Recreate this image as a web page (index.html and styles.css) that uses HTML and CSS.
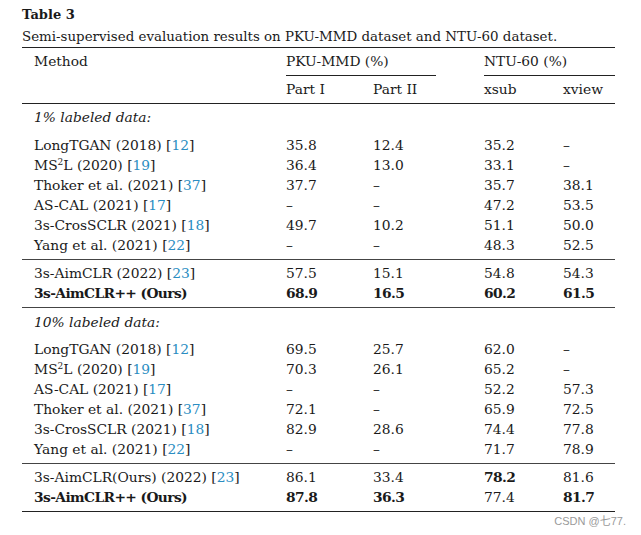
FILE: index.html
```html
<!DOCTYPE html>
<html>
<head>
<meta charset="utf-8">
<link rel="stylesheet" href="styles.css">
</head>
<body>
<div class="page">
  <div class="title">Table 3</div>
  <div class="caption">Semi-supervised evaluation results on PKU-MMD dataset and NTU-60 dataset.</div>
  <div class="tbl">
    <div class="thead">
      <div class="row h1">
        <div class="c1">Method</div>
        <div class="grp pku"><span>PKU-MMD (%)</span></div>
        <div class="grp ntu"><span>NTU-60 (%)</span></div>
      </div>
      <div class="row h2">
        <div class="c1"></div>
        <div>Part I</div>
        <div>Part II</div>
        <div>xsub</div>
        <div>xview</div>
      </div>
    </div>

    <div class="sec s1">
      <div class="row label"><div class="c1"><i>1% labeled data:</i></div></div>
      <div class="rows">
        <div class="row"><div class="c1">LongTGAN (2018) [<a>12</a>]</div><div>35.8</div><div>12.4</div><div>35.2</div><div>–</div></div>
        <div class="row"><div class="c1">MS<sup>2</sup>L (2020) [<a>19</a>]</div><div>36.4</div><div>13.0</div><div>33.1</div><div>–</div></div>
        <div class="row"><div class="c1">Thoker et al. (2021) [<a>37</a>]</div><div>37.7</div><div>–</div><div>35.7</div><div>38.1</div></div>
        <div class="row"><div class="c1">AS-CAL (2021) [<a>17</a>]</div><div>–</div><div>–</div><div>47.2</div><div>53.5</div></div>
        <div class="row"><div class="c1">3s-CrosSCLR (2021) [<a>18</a>]</div><div>49.7</div><div>10.2</div><div>51.1</div><div>50.0</div></div>
        <div class="row"><div class="c1">Yang et al. (2021) [<a>22</a>]</div><div>–</div><div>–</div><div>48.3</div><div>52.5</div></div>
      </div>
    </div>

    <div class="sec ours o1">
      <div class="row"><div class="c1">3s-AimCLR (2022) [<a>23</a>]</div><div>57.5</div><div>15.1</div><div>54.8</div><div>54.3</div></div>
      <div class="row"><div class="c1"><b>3s-AimCLR++ (Ours)</b></div><div><b>68.9</b></div><div><b>16.5</b></div><div><b>60.2</b></div><div><b>61.5</b></div></div>
    </div>

    <div class="sec s2">
      <div class="row label"><div class="c1"><i>10% labeled data:</i></div></div>
      <div class="rows">
        <div class="row"><div class="c1">LongTGAN (2018) [<a>12</a>]</div><div>69.5</div><div>25.7</div><div>62.0</div><div>–</div></div>
        <div class="row"><div class="c1">MS<sup>2</sup>L (2020) [<a>19</a>]</div><div>70.3</div><div>26.1</div><div>65.2</div><div>–</div></div>
        <div class="row"><div class="c1">AS-CAL (2021) [<a>17</a>]</div><div>–</div><div>–</div><div>52.2</div><div>57.3</div></div>
        <div class="row"><div class="c1">Thoker et al. (2021) [<a>37</a>]</div><div>72.1</div><div>–</div><div>65.9</div><div>72.5</div></div>
        <div class="row"><div class="c1">3s-CrosSCLR (2021) [<a>18</a>]</div><div>82.9</div><div>28.6</div><div>74.4</div><div>77.8</div></div>
        <div class="row"><div class="c1">Yang et al. (2021) [<a>22</a>]</div><div>–</div><div>–</div><div>71.7</div><div>78.9</div></div>
      </div>
    </div>

    <div class="sec ours o2">
      <div class="row"><div class="c1">3s-AimCLR(Ours) (2022) [<a>23</a>]</div><div>86.1</div><div>33.4</div><div><b>78.2</b></div><div>81.6</div></div>
      <div class="row"><div class="c1"><b>3s-AimCLR++ (Ours)</b></div><div><b>87.8</b></div><div><b>36.3</b></div><div>77.4</div><div><b>81.7</b></div></div>
    </div>
  </div>
  <div class="mark">CSDN @七77.</div>
</div>
</body>
</html>
```

FILE: styles.css
```css
html, body {
  margin: 0;
  padding: 0;
  background: #fff;
}
.page {
  width: 641px;
  height: 535px;
  font-family: "DejaVu Serif", "Liberation Serif", serif;
  font-size: 13.8px;
  color: #1a1a1a;
  padding-left: 22px;
  box-sizing: border-box;
}
.title {
  font-weight: bold;
  font-size: 13px;
  line-height: 20px;
  padding-top: 5px;
  height: 20px;
}
.caption {
  font-size: 13.4px;
  line-height: 20px;
  padding-top: 2px;
  height: 20px;
}
.tbl {
  width: 593px;
  border-top: 1px solid #222;
  border-bottom: 1px solid #222;
}
.row {
  display: grid;
  grid-template-columns: 264px 87px 111px 79px 52px;
  height: 20px;
  line-height: 20px;
  white-space: nowrap;
}
.c1 {
  padding-left: 12px;
}
.thead {
  border-bottom: 1px solid #222;
}
.h1 {
  height: auto;
  padding-top: 3px;
}
.h1 .grp span {
  display: block;
  padding-bottom: 4px;
  border-bottom: 1px solid #222;
}
.h1 .pku {
  grid-column: 2 / 4;
}
.h1 .pku span {
  width: 150px;
}
.h1 .ntu {
  grid-column: 4 / 6;
}
.h2 {
  padding-top: 3px;
  padding-bottom: 4px;
}
.sec {
  border-bottom: 1px solid #444;
}
.s1 {
  padding-top: 3px;
  padding-bottom: 4px;
}
.s2 {
  padding-top: 4px;
  padding-bottom: 4px;
}
.s1 .rows {
  margin-top: 8px;
}
.s2 .rows {
  margin-top: 7px;
}
.o1 {
  padding-top: 3px;
  padding-bottom: 4px;
}
.o2 {
  padding-top: 3px;
  padding-bottom: 4px;
  border-bottom: none;
}
a {
  color: #2a8dc2;
  text-decoration: none;
}
sup {
  font-size: 9px;
  line-height: 0;
  vertical-align: 5px;
}
b {
  font-weight: bold;
  letter-spacing: -0.6px;
}
.mark {
  display: flex;
  justify-content: flex-end;
  width: 604px;
  font-family: "Liberation Sans", "Noto Sans CJK SC", sans-serif;
  font-size: 11px;
  line-height: 14px;
  color: #9a9a9a;
  padding-top: 2px;
}
```
